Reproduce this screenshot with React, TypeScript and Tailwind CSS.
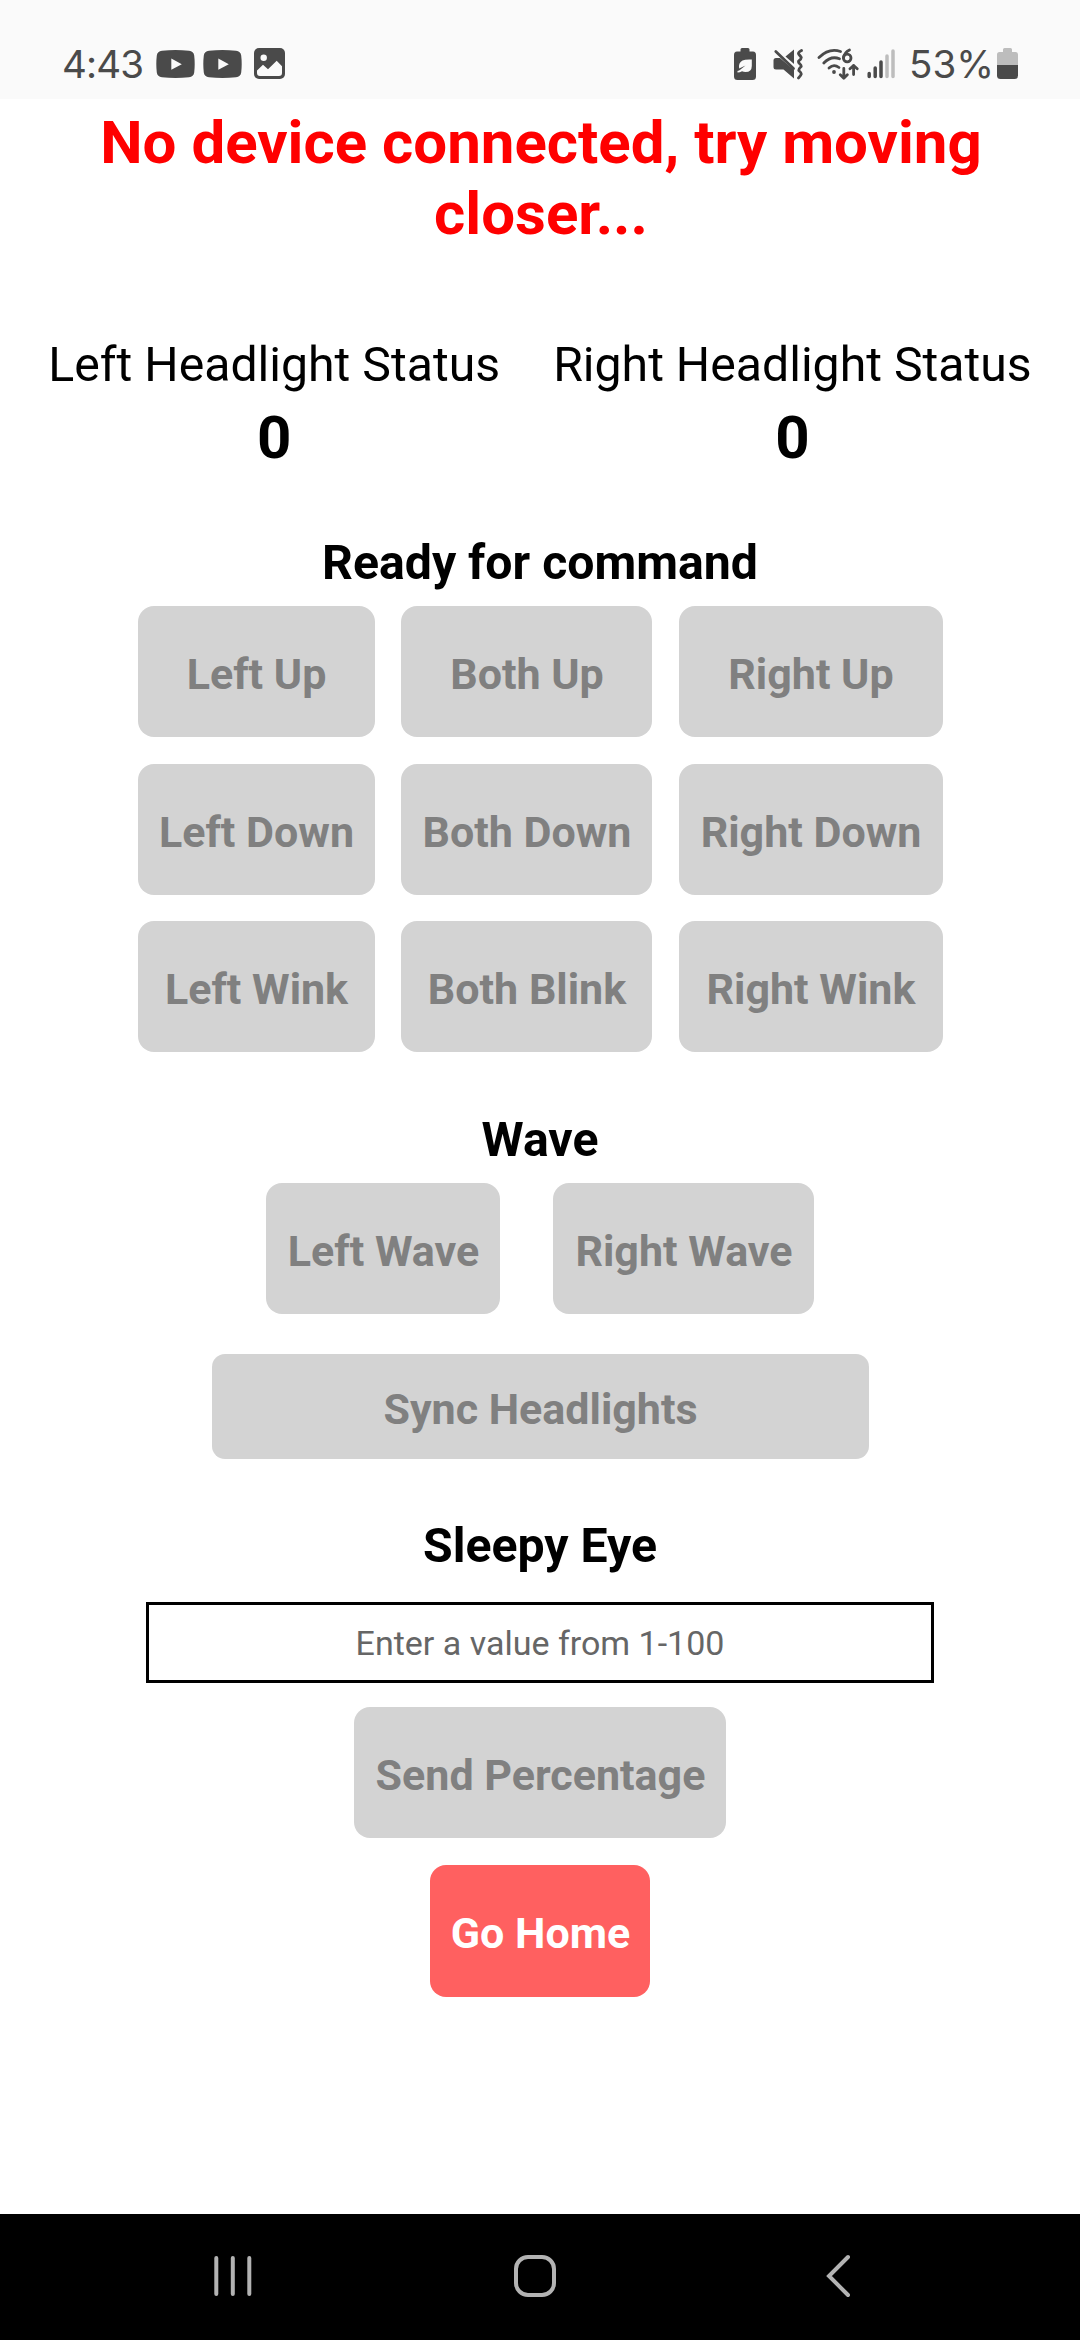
import type { ReactNode } from "react";

const ink = "#4a4a4a";

function CommandButton({ children, className = "rounded-[16px]" }: { children: ReactNode; className?: string }) {
  return (
    <button
      className={`flex items-center justify-center whitespace-nowrap bg-[#d3d3d3] pt-[5px] pl-[1px] text-[43px] leading-[50px] font-bold text-[#808080] ${className}`}
    >
      {children}
    </button>
  );
}

function Heading({ children, className = "" }: { children: ReactNode; className?: string }) {
  return <h2 className={`text-center text-[48.2px] leading-[56px] font-bold ${className}`}>{children}</h2>;
}

function HeadlightStatus({ label, value }: { label: string; value: number }) {
  return (
    <div className="flex flex-col items-center gap-[10px]">
      <span className="text-[48.2px] leading-[56px] whitespace-nowrap">{label}</span>
      <span className="text-[60px] leading-[70px] font-bold">{value}</span>
    </div>
  );
}

function VideoIcon({ className = "" }: { className?: string }) {
  return (
    <svg className={className} width="39" height="28" viewBox="0 0 39 28">
      <path d="M6 .8Q19.500-.6 33 .8Q37.600 1.200 38.200 5.500Q39.200 14 38.200 22.500Q37.600 26.800 33 27.200Q19.500 28.600 6 27.200Q1.400 26.800.8 22.500Q-.2 14 .8 5.500Q1.400 1.200 6 .8Z" fill={ink} />
      <path d="M15.300 8.500V19.800L25.800 14.200Z" fill="#fafafa" />
    </svg>
  );
}

function StatusBar() {
  return (
    <header className="flex h-[99px] shrink-0 items-center justify-between bg-[#fafafa] pr-[62px] pl-[62px] pt-[28px] text-[#4a4a4a]">
      <div className="flex items-center">
        <span className="w-[94px] font-['Inter',sans-serif] text-[38.5px] leading-[46px] tracking-[-0.9px]">4:43</span>
        <VideoIcon />
        <VideoIcon className="ml-2" />
        <svg className="ml-3" width="31" height="31" viewBox="0 0 31 31">
          <rect width="31" height="31" rx="5" fill={ink} />
          <circle cx="9.700" cy="9.700" r="3.200" fill="#fafafa" />
          <path d="M3 22.500L9 16.800L14 21.200L22.700 12.800L28 18.300V25Q28 28 25 28H6Q3 28 3 25Z" fill="#fafafa" />
        </svg>
      </div>
      <div className="flex items-center">
        <svg width="22" height="32" viewBox="0 0 22 32">
          <path d="M8 0H14Q15.500 0 15.500 1.500V3.500H19Q22 3.500 22 7V28.500Q22 32 18.500 32H3.500Q0 32 0 28.500V7Q0 3.500 3 3.500H6.500V1.500Q6.500 0 8 0Z" fill={ink} />
          <path d="M17.800 11.500V18Q17.800 24 11.500 24Q9.500 24 8 23.200Q6 24.400 3.500 24.600V23Q5.200 22.500 6.500 21.500L11.500 17.500L5.200 20.500Q4 15 8.500 12.500Q11 11.200 17.800 11.500Z" fill="#fafafa" />
        </svg>
        <svg className="ml-[17px]" width="30" height="32" viewBox="0 0 30 32">
          <path d="M21 1.500V16L12.500 8.500Z" fill={ink} />
          <path d="M3 10H7L21 22V30.500L10.500 21.500H3Q.5 21.500.5 19V12.500Q.5 10 3 10Z" fill={ink} />
          <path d="M2.800 3.500L20.500 20.500" stroke={ink} strokeWidth="2.800" strokeLinecap="round" />
          <path d="M28.500 2.500Q24.500 4.500 25.800 6.300Q27.500 8.200 28.300 9.500Q28.300 11 25.800 12.800Q25 14 26.500 15.500Q28.500 17.300 28.200 18.500Q25.500 21 25.800 22.500Q28.300 24.800 28.300 26Q28 27.500 25.500 30" fill="none" stroke={ink} strokeWidth="2.800" strokeLinecap="round" strokeLinejoin="round" />
        </svg>
        <svg className="ml-[14px]" width="42" height="32" viewBox="0 0 42 32" fill="none" stroke={ink} strokeWidth="2.800" strokeLinecap="round" strokeLinejoin="round">
          <path d="M2 9.500Q12 -.3 23.500 3.500" />
          <path d="M6.800 15Q14 7.500 22.500 10.800" />
          <path d="M12 20Q16.800 15.500 22 19.500" />
          <circle cx="17" cy="24" r="1.900" fill={ink} stroke="none" />
          <path d="M32.500 2Q27.300 4.500 26.500 9.800" />
          <circle cx="30.200" cy="10" r="3.800" />
          <path d="M26.800 20.500V30M23.300 26.800L26.800 30.200L30.300 26.800" />
          <path d="M36.600 26.500V17.500M33 20.800L36.600 17.400L40.200 20.800" />
        </svg>
        <svg className="ml-2" width="28" height="32" viewBox="0 0 28 32" strokeWidth="3.500" strokeLinecap="round">
          <path d="M2.200 25.500V28.500M8.200 20V28.500M14 14V28.500" stroke={ink} />
          <path d="M20 8V28.500M26 3V28.500" stroke="#bdbdbd" />
        </svg>
        <span className="ml-[14px] w-[85px] font-['Inter',sans-serif] text-[38.5px] leading-[46px] whitespace-nowrap">53%</span>
        <svg className="ml-[3px]" width="21" height="31" viewBox="0 0 21 31">
          <path d="M7.500 0H13.500Q15 0 15 1.500V4H18.500Q21 4 21 6.500V17H0V6.500Q0 4 2.500 4H6V1.500Q6 0 7.500 0Z" fill="#bdbdbd" />
          <path d="M0 17H21V27.500Q21 31 17.500 31H3.500Q0 31 0 27.500Z" fill={ink} />
        </svg>
      </div>
    </header>
  );
}

function NavigationBar() {
  return (
    <nav className="flex h-[126px] shrink-0 justify-between bg-black pt-[40px] pr-[229px] pl-[213px]">
      <svg width="40" height="44" viewBox="0 0 40 44" stroke="#b3b3b3" strokeWidth="4" strokeLinecap="round">
        <path d="M3.300 4V40M19.800 4V40M36.300 4V40" />
      </svg>
      <svg className="-ml-2" width="44" height="44" viewBox="0 0 44 44">
        <rect x="3" y="3" width="38" height="38" rx="12" fill="none" stroke="#b3b3b3" strokeWidth="4" />
      </svg>
      <svg width="26" height="44" viewBox="0 0 26 44">
        <path d="M23 3L4 22L23 41" fill="none" stroke="#b3b3b3" strokeWidth="4" strokeLinecap="round" />
      </svg>
    </nav>
  );
}

export default function App() {
  return (
    <div className="flex h-[2340px] w-[1080px] flex-col bg-white font-['Roboto',sans-serif] text-black">
      <StatusBar />
      <main className="flex flex-1 flex-col items-center">
        <h1 className="mt-2 pr-[59px] pl-[61px] text-center text-[60px] leading-[71px] font-bold text-[#ff0000]">
          No device connected, try moving closer...
        </h1>
        <section className="mt-[88px] flex justify-center gap-[53px]">
          <HeadlightStatus label="Left Headlight Status" value={0} />
          <HeadlightStatus label="Right Headlight Status" value={0} />
        </section>
        <Heading className="mt-[62px]">Ready for command</Heading>
        <section className="mt-[15px] grid grid-cols-[237px_251px_264px] grid-rows-[131px_131px_131px] gap-x-[26.5px] gap-y-[26.5px]">
          <CommandButton>Left Up</CommandButton>
          <CommandButton>Both Up</CommandButton>
          <CommandButton>Right Up</CommandButton>
          <CommandButton>Left Down</CommandButton>
          <CommandButton>Both Down</CommandButton>
          <CommandButton>Right Down</CommandButton>
          <CommandButton>Left Wink</CommandButton>
          <CommandButton>Both Blink</CommandButton>
          <CommandButton>Right Wink</CommandButton>
        </section>
        <Heading className="mt-[60px]">Wave</Heading>
        <section className="mt-[15px] flex gap-[53px]">
          <CommandButton className="h-[131px] w-[234px] rounded-[16px]">Left Wave</CommandButton>
          <CommandButton className="h-[131px] w-[261px] rounded-[16px]">Right Wave</CommandButton>
        </section>
        <CommandButton className="mt-[40px] h-[105px] w-[657px] rounded-[13px]">Sync Headlights</CommandButton>
        <Heading className="mt-[59px]">Sleepy Eye</Heading>
        <input
          className="mt-[28px] h-[81px] w-[788px] border-[3px] border-black bg-white text-center text-[34px] text-black placeholder:text-[#666666] placeholder:opacity-100"
          placeholder="Enter a value from 1-100"
        />
        <CommandButton className="mt-[24px] h-[131px] w-[372px] rounded-[16px]">Send Percentage</CommandButton>
        <button className="mt-[27px] flex h-[132px] w-[220px] items-center justify-center rounded-[16px] bg-[#ff6060] pt-[3px] pl-[1px] text-[43px] leading-[50px] font-bold whitespace-nowrap text-white">
          Go Home
        </button>
      </main>
      <NavigationBar />
    </div>
  );
}
